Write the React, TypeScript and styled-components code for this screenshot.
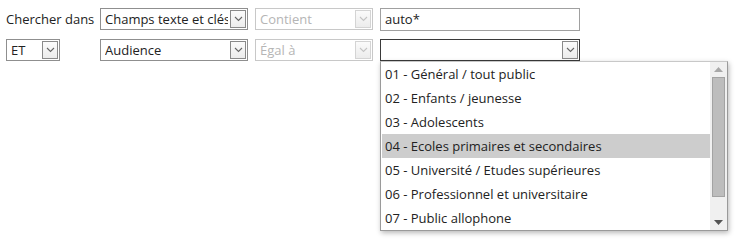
import React from "react";
import styled, { createGlobalStyle } from "styled-components";

const Global = createGlobalStyle`
  html, body {
    margin: 0;
    background: #fff;
  }
  body {
    font-family: "Open Sans", "DejaVu Sans", sans-serif;
    font-size: 13px;
    color: #222;
  }
`;

const Page = styled.div`
  min-height: 241px;
`;

const Form = styled.div`
  padding: 8px 6px;
  display: flex;
  flex-direction: column;
  gap: 9px;
`;

const Row = styled.div`
  display: flex;
  align-items: center;
  gap: 7px;
  height: 22px;
`;

const Label = styled.div`
  width: 87px;
  white-space: nowrap;
`;

const LeadCell = styled.div`
  width: 87px;
`;

const SelectBox = styled.div<{ $w: number; $disabled?: boolean; $open?: boolean }>`
  position: relative;
  box-sizing: border-box;
  width: ${(p) => p.$w}px;
  height: 22px;
  border: 1px solid ${(p) => (p.$open ? "#3a3a3a" : p.$disabled ? "#c8c8c8" : "#8f8f8f")};
  background: #fff;
  color: ${(p) => (p.$disabled ? "#b5b5b5" : "#222")};
  padding: 0 19px 0 4px;
  line-height: 20px;
  white-space: nowrap;
`;

const Value = styled.span`
  display: block;
  overflow: hidden;
`;

const ArrowBtn = styled.span<{ $disabled?: boolean }>`
  position: absolute;
  right: 1px;
  top: 1px;
  box-sizing: border-box;
  width: 16px;
  height: 18px;
  border: 1px solid ${(p) => (p.$disabled ? "#d4d4d4" : "#8a8a8a")};
  background: linear-gradient(#fbfbfb, #ececec);
  display: flex;
  align-items: center;
  justify-content: center;
  color: ${(p) => (p.$disabled ? "#c4c4c4" : "#666")};
`;

const TextInput = styled.div`
  box-sizing: border-box;
  width: 200px;
  height: 23px;
  border: 1px solid #a0a0a0;
  padding: 0 4px;
  line-height: 21px;
`;

const OpenWrap = styled.div`
  position: relative;
`;

const Dropdown = styled.div`
  position: absolute;
  left: 0;
  top: 22px;
  width: 348px;
  box-sizing: border-box;
  border: 1px solid #9a9a9a;
  border-top-color: #c8c8c8;
  background: #fff;
  box-shadow: 1px 2px 5px rgba(0, 0, 0, 0.28);
  display: flex;
  z-index: 2;
`;

const List = styled.div`
  flex: 1;
  padding-left: 1px;
`;

const Item = styled.div<{ $active?: boolean }>`
  height: 24px;
  line-height: 25px;
  padding-left: 3px;
  background: ${(p) => (p.$active ? "#cdcdcd" : "transparent")};
  white-space: nowrap;
`;

const Scrollbar = styled.div`
  width: 17px;
  background: #f0f0f0;
  display: flex;
  flex-direction: column;
  align-items: center;
`;

const ScrollArrow = styled.div`
  height: 15px;
  display: flex;
  align-items: center;
  justify-content: center;
`;

const Spacer = styled.div`
  flex: 1;
`;

const Thumb = styled.div`
  box-sizing: border-box;
  width: 13px;
  height: 120px;
  background: #bdbdbd;
  border: 1px solid #a3a3a3;
`;

const Chevron = () => (
  <svg width="9" height="6" viewBox="0 0 9 6">
    <path d="M1 1 L4.5 4.5 L8 1" fill="none" stroke="currentColor" strokeWidth="1.1" />
  </svg>
);

const Select: React.FC<{ w: number; value: string; disabled?: boolean; open?: boolean }> = ({
  w,
  value,
  disabled,
  open,
}) => (
  <SelectBox $w={w} $disabled={disabled} $open={open}>
    <Value>{value || "\u00a0"}</Value>
    <ArrowBtn $disabled={disabled}>
      <Chevron />
    </ArrowBtn>
  </SelectBox>
);

const audiences = [
  "01 - Général / tout public",
  "02 - Enfants / jeunesse",
  "03 - Adolescents",
  "04 - Ecoles primaires et secondaires",
  "05 - Université / Etudes supérieures",
  "06 - Professionnel et universitaire",
  "07 - Public allophone",
];

const App: React.FC = () => {
  return (
    <Page>
      <Global />
      <Form>
        <Row>
          <Label>Chercher dans</Label>
          <Select w={148} value="Champs texte et clés" />
          <Select w={118} value="Contient" disabled />
          <TextInput>auto*</TextInput>
        </Row>
        <Row>
          <LeadCell>
            <Select w={54} value="ET" />
          </LeadCell>
          <Select w={148} value="Audience" />
          <Select w={118} value="Égal à" disabled />
          <OpenWrap>
            <Select w={200} value="" open />
            <Dropdown>
              <List>
                {audiences.map((a, i) => (
                  <Item key={a} $active={i === 3}>
                    {a}
                  </Item>
                ))}
              </List>
              <Scrollbar>
                <ScrollArrow>
                  <svg width="9" height="5" viewBox="0 0 9 5">
                    <path d="M0 5 L4.5 0 L9 5 Z" fill="#a8a8a8" />
                  </svg>
                </ScrollArrow>
                <Thumb />
                <Spacer />
                <ScrollArrow>
                  <svg width="9" height="5" viewBox="0 0 9 5">
                    <path d="M0 0 L4.5 5 L9 0 Z" fill="#555" />
                  </svg>
                </ScrollArrow>
              </Scrollbar>
            </Dropdown>
          </OpenWrap>
        </Row>
      </Form>
    </Page>
  );
};

export default App;
